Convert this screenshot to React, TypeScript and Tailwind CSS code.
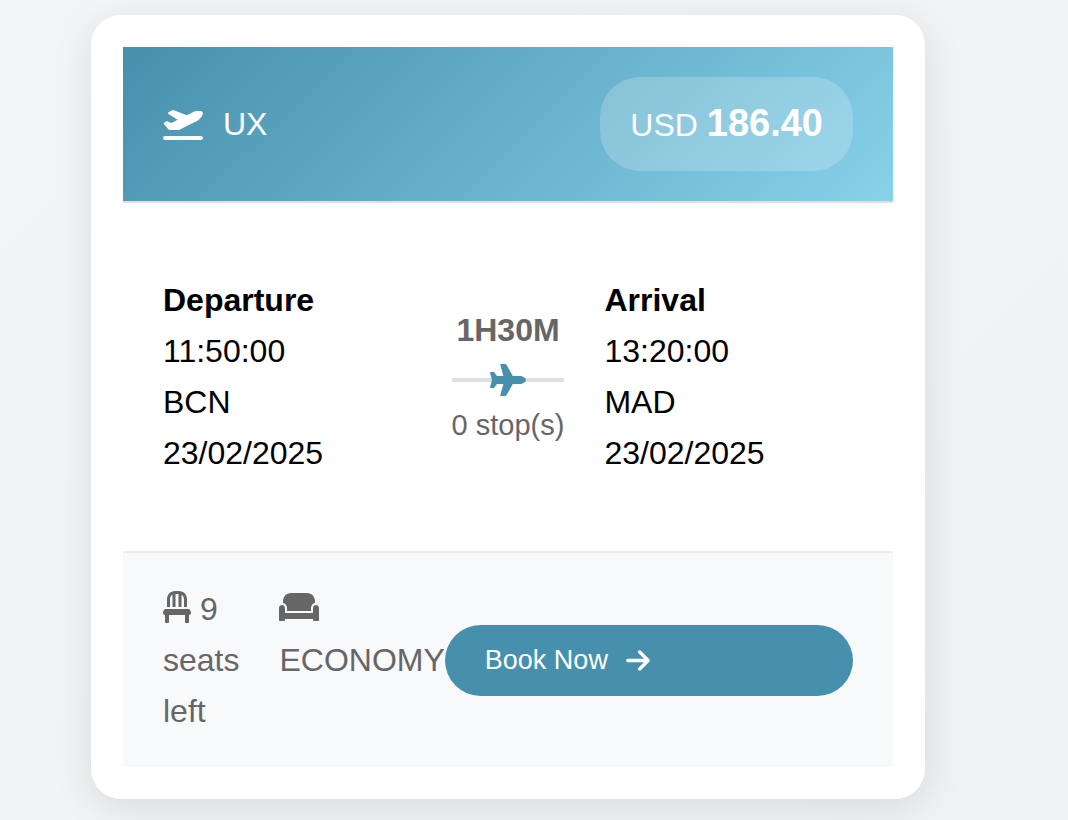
import type { ReactNode } from "react";
import { FaChair } from "react-icons/fa";
import { FaArrowRight, FaPlane, FaPlaneDeparture } from "react-icons/fa6";

function CouchIcon({ className }: { className?: string }) {
  return (
    <svg viewBox="0 0 640 512" fill="currentColor" aria-hidden="true" className={className}>
      <path d="M592 224c-26.5 0-48 21.5-48 48v80H96v-80c0-26.5-21.5-48-48-48S0 245.500 0 272v192c0 8.800 7.200 16 16 16h64c8.800 0 16-7.200 16-16v-16h448v16c0 8.800 7.200 16 16 16h64c8.800 0 16-7.200 16-16V272c0-26.500-21.500-48-48-48zM128 272v48h384v-48c0-38.600 27.500-71 64-78.400V160c0-70.700-57.300-128-128-128H192C121.300 32 64 89.300 64 160v33.600c36.500 7.400 64 39.800 64 78.400z" />
    </svg>
  );
}

function Stop({ title, lines }: { title: string; lines: string[] }) {
  return (
    <div className="flex-1">
      <h2 className="font-bold">{title}</h2>
      {lines.map((line) => (
        <p key={line}>{line}</p>
      ))}
    </div>
  );
}

function Detail({ children }: { children: ReactNode }) {
  return <p className="w-min text-[#666666]">{children}</p>;
}

export default function App() {
  return (
    <main className="min-h-screen bg-linear-135 from-[#f4f5f7] to-[#f0f1f3] pt-[15px] pr-[143px] pb-[21px] pl-[91px] font-['Liberation_Sans',Arial,sans-serif] text-[32px] leading-[51px] text-black">
      <article className="rounded-[30px] bg-white p-8 shadow-[0_8px_40px_rgba(0,0,0,0.1)]">
        <header className="flex items-center justify-between border-b-2 border-[#e0e0e0] bg-linear-135 from-[#4790ad] to-[#87d1ea] px-10 py-[30px] text-white">
          <div className="flex items-center gap-5">
            <FaPlaneDeparture className="size-10" />
            <span>UX</span>
          </div>
          <div className="rounded-[40px] bg-white/20 px-[30px] py-5 leading-[52px]">
            USD <strong className="text-[38px]">186.40</strong>
          </div>
        </header>
        <section className="flex items-center gap-10 px-10 py-[72px]">
          <Stop title="Departure" lines={["11:50:00", "BCN", "23/02/2025"]} />
          <div className="pt-[2px] text-center text-[#666666]">
            <p className="font-bold">1H30M</p>
            <div className="mt-[22px] mb-[18px] flex h-1 items-center justify-center bg-[#e0e0e0]">
              <FaPlane className="size-9 shrink-0 text-[#4790ad]" />
            </div>
            <p className="text-[29px]">0 stop(s)</p>
          </div>
          <Stop title="Arrival" lines={["13:20:00", "MAD", "23/02/2025"]} />
        </section>
        <footer className="flex items-center border-t-2 border-[#eeeeee] bg-[#f8f9fb] px-10 pt-[31px] pb-[30px]">
          <div className="flex gap-10">
            <Detail>
              <FaChair className="inline h-8 w-7 align-[-3px]" /> 9 seats left
            </Detail>
            <Detail>
              <CouchIcon className="inline h-8 w-10 align-[-3px]" /> ECONOMY
            </Detail>
          </div>
          <button className="flex flex-1 items-center gap-[18px] rounded-full bg-[#4790ad] px-10 py-[10px] text-[27px] text-white">
            Book Now <FaArrowRight className="h-[27px] w-6" />
          </button>
        </footer>
      </article>
    </main>
  );
}
